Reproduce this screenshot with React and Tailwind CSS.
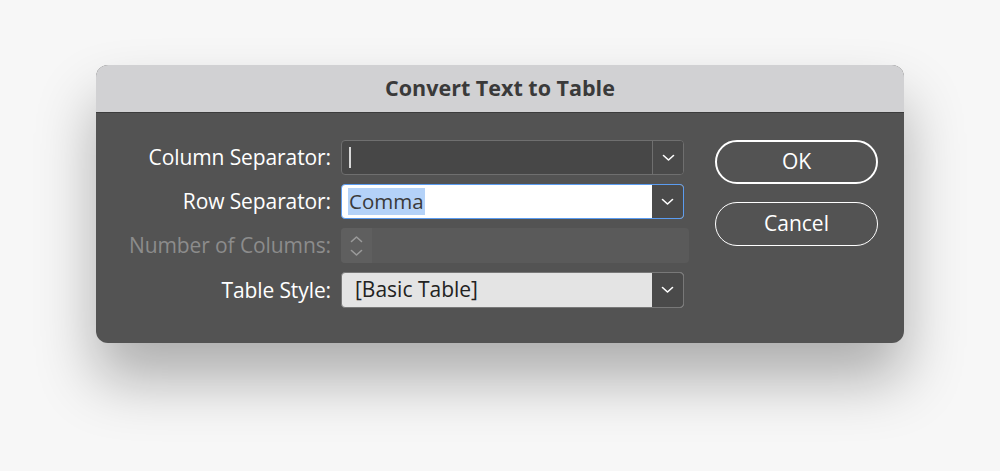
import React from "react";

const font = { fontFamily: '"Open Sans", "Noto Sans", sans-serif' };

function Chevron({ className = "" }) {
  return (
    <svg width="13" height="8" viewBox="0 0 13 8" className={className}>
      <path d="M1.5 1.5 L6.5 6 L11.5 1.5" fill="none" stroke="currentColor" strokeWidth="1.6" strokeLinecap="round" strokeLinejoin="round" />
    </svg>
  );
}

function Label({ children, dim }) {
  return (
    <div className={`w-[245px] text-right pr-[10px] text-[21px] leading-none tracking-[-0.1px] ${dim ? "text-[#8c8c8c]" : "text-white"}`}>
      {children}
    </div>
  );
}

export default function App() {
  return (
    <div className="w-[1000px] h-[471px] bg-[#f7f7f7] pt-[65px] pl-[96px]" style={font}>
      <div className="w-[808px] h-[278px] rounded-[12px] overflow-hidden bg-[#535353] shadow-[0_36px_60px_rgba(0,0,0,0.3)] flex flex-col">
        {/* title bar */}
        <div className="h-[48px] bg-[#d1d1d3] border-b border-[#3c3c3c] flex items-center justify-center">
          <span className="text-[21.5px] font-bold text-[#3a3a3a]">Convert Text to Table</span>
        </div>

        <div className="flex pt-[27px]">
          {/* fields */}
          <div className="flex flex-col gap-[9px]">
            <div className="flex items-center h-[35px]">
              <Label>Column Separator:</Label>
              <div className="flex w-[343px] h-[35px] rounded-[4px] border border-[#6f6f6f] bg-[#474747] overflow-hidden">
                <div className="flex-1 flex items-center pl-[7px]">
                  <span className="w-[2px] h-[21px] bg-[#d8d8d8]" />
                </div>
                <div className="w-[31px] border-l border-[#6f6f6f] bg-[#4a4a4a] flex items-center justify-center text-white">
                  <Chevron />
                </div>
              </div>
            </div>

            <div className="flex items-center h-[35px]">
              <Label>Row Separator:</Label>
              <div className="flex w-[343px] h-[35px] rounded-[4px] border-[1.5px] border-[#5b9cf0] bg-white overflow-hidden">
                <div className="flex-1 flex items-center pl-[6px]">
                  <span className="bg-[#b4d2f8] text-[#3a3a3a] text-[20.5px] leading-[27px] px-[1px]">Comma</span>
                </div>
                <div className="w-[31px] bg-[#4a4a4a] flex items-center justify-center text-white">
                  <Chevron />
                </div>
              </div>
            </div>

            <div className="flex items-center h-[35px]">
              <Label dim>Number of Columns:</Label>
              <div className="flex w-[348px] h-[35px] rounded-[4px] bg-[#5a5a5a] overflow-hidden">
                <div className="w-[31px] bg-[#5f5f5f] flex flex-col items-center justify-center gap-[6px] text-[#9a9a9a]">
                  <Chevron className="rotate-180" />
                  <Chevron />
                </div>
              </div>
            </div>

            <div className="flex items-center h-[36px]">
              <Label>Table Style:</Label>
              <div className="flex w-[343px] h-[36px] rounded-[4px] border border-[#787878] bg-[#e4e4e4] overflow-hidden">
                <div className="flex-1 flex items-center pl-[13px]">
                  <span className="text-[#222] text-[21px]">[Basic Table]</span>
                </div>
                <div className="w-[31px] bg-[#4a4a4a] flex items-center justify-center text-white">
                  <Chevron />
                </div>
              </div>
            </div>
          </div>

          {/* buttons */}
          <div className="flex flex-col gap-[18px] ml-[26px]">
            <button className="w-[163px] h-[44px] rounded-full border-[2.5px] border-white text-white text-[21px] flex items-center justify-center">
              OK
            </button>
            <button className="w-[163px] h-[44px] rounded-full border-[1.5px] border-white text-white text-[21px] flex items-center justify-center">
              Cancel
            </button>
          </div>
        </div>
      </div>
    </div>
  );
}
